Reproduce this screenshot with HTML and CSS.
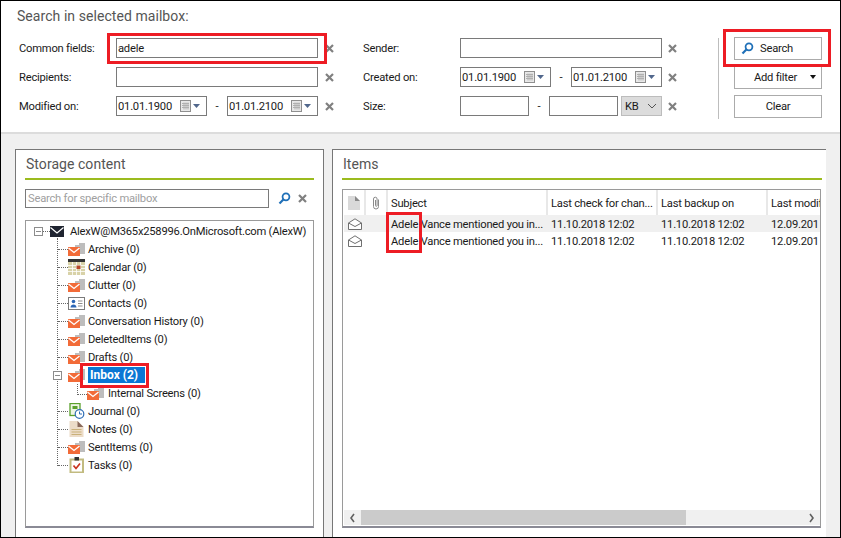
FILE: index.html
```html
<!DOCTYPE html>
<html lang="en">
<head>
<meta charset="utf-8">
<title>Search in selected mailbox</title>
<link rel="stylesheet" href="styles.css">
</head>
<body>
<svg class="defs" width="0" height="0" aria-hidden="true">
  <defs>
    <symbol id="x" viewBox="0 0 9 9"><path d="M1 1L8 8M8 1L1 8" stroke="#808080" stroke-width="2.2" fill="none"/></symbol>
    <symbol id="cal" viewBox="0 0 20 12">
      <rect x=".5" y=".5" width="10" height="11" fill="#e8e8e8" stroke="#8f8f8f"/>
      <path d="M2 3.500h7M2 5.500h7M2 7.500h7M4 2.500v7M6 2.500v7M8 2.500v7" stroke="#b0b0b0" fill="none"/>
      <path d="M13 4h7l-3.500 4z" fill="#51678c"/>
    </symbol>
    <symbol id="mag" viewBox="0 0 14 14">
      <circle cx="8.600" cy="5.200" r="3.700" fill="none" stroke="#1f70b8" stroke-width="1.900"/>
      <path d="M5.800 8L1.600 12.400" stroke="#1f70b8" stroke-width="2.300"/>
    </symbol>
    <symbol id="mailfolder" viewBox="0 0 17 14">
      <path d="M7 5V3h4V1h6v11h-5V5z" fill="#bdbdbd"/>
      <path d="M12 5v9H0V5z" fill="#fff"/>
      <rect x="0" y="5" width="12" height="9" fill="#f26b38"/>
      <path d="M.5 6L6 10.500 11.500 6" fill="none" stroke="#fff" stroke-width="1.300"/>
    </symbol>
    <symbol id="mailopen" viewBox="0 0 14 12">
      <path d="M.5 5L7 .8 13.500 5v6.500H.5z" fill="#fff" stroke="#6f6f6f"/>
      <path d="M.5 5L7 8.500 13.500 5" fill="none" stroke="#6f6f6f"/>
    </symbol>
  </defs>
</svg>

<div class="frame">
  <header class="search">
    <h1 class="search-title">Search in selected mailbox:</h1>
    <div class="search-body">
      <div class="fields">
        <div class="row">
          <label class="lab lab-a">Common fields:</label>
          <div class="field wide"><span class="val">adele</span></div>
          <svg class="clear"><use href="#x"/></svg>
          <label class="lab lab-b">Sender:</label>
          <div class="field wide"></div>
          <svg class="clear"><use href="#x"/></svg>
        </div>
        <div class="row">
          <label class="lab lab-a">Recipients:</label>
          <div class="field wide"></div>
          <svg class="clear"><use href="#x"/></svg>
          <label class="lab lab-b">Created on:</label>
          <div class="range">
            <div class="field date"><span class="val">01.01.1900</span><svg class="calicon"><use href="#cal"/></svg></div>
            <span class="dash">-</span>
            <div class="field date"><span class="val">01.01.2100</span><svg class="calicon"><use href="#cal"/></svg></div>
          </div>
          <svg class="clear"><use href="#x"/></svg>
        </div>
        <div class="row">
          <label class="lab lab-a">Modified on:</label>
          <div class="range">
            <div class="field date"><span class="val">01.01.1900</span><svg class="calicon"><use href="#cal"/></svg></div>
            <span class="dash">-</span>
            <div class="field date"><span class="val">01.01.2100</span><svg class="calicon"><use href="#cal"/></svg></div>
          </div>
          <svg class="clear"><use href="#x"/></svg>
          <label class="lab lab-b">Size:</label>
          <div class="range">
            <div class="field size"></div>
            <span class="dash">-</span>
            <div class="field size"></div>
            <div class="unit"><span>KB</span><svg class="chev" viewBox="0 0 10 6"><path d="M1 1l4 4 4-4" fill="none" stroke="#555"/></svg></div>
          </div>
          <svg class="clear"><use href="#x"/></svg>
        </div>
      </div>
      <div class="actions">
        <button class="btn btn-search"><svg class="mag"><use href="#mag"/></svg>Search</button>
        <button class="btn btn-filter">Add filter<span class="caret"></span></button>
        <button class="btn">Clear</button>
      </div>
    </div>
  </header>

  <main class="content">
    <section class="panel storage">
      <h2 class="panel-title">Storage content</h2>
      <div class="finder">
        <div class="field findbox"><span class="placeholder">Search for specific mailbox</span></div>
        <svg class="mag-big"><use href="#mag"/></svg>
        <svg class="clear clear-find"><use href="#x"/></svg>
      </div>
      <div class="tree">
        <div class="guide guide-main"></div>
        <div class="guide guide-sub"></div>
        <div class="node root">
          <span class="toggle"></span>
          <svg class="ico-root" viewBox="0 0 14 11"><rect width="14" height="11" fill="#1f2430"/><path d="M.5 1.500L7 7l6.500-5.500" fill="none" stroke="#fff" stroke-width="1.200"/></svg>
          <span class="txt">AlexW@M365x258996.OnMicrosoft.com (AlexW)</span>
        </div>
        <div class="node lvl1"><svg class="ico"><use href="#mailfolder"/></svg><span class="txt">Archive (0)</span></div>
        <div class="node lvl1"><svg class="ico ico-tall" viewBox="0 0 17 16"><rect x="0" y="0" width="17" height="16" fill="#d8d2a8"/><rect x="0" y="0" width="17" height="3" fill="#333"/><path d="M0 6.500h17M0 9.500h17M0 12.500h17M4.500 3v13M8.500 3v13M12.500 3v13" stroke="#fff" stroke-width=".8"/><rect x="8.500" y="6.500" width="4" height="3.500" fill="#b5482a"/></svg><span class="txt">Calendar (0)</span></div>
        <div class="node lvl1"><svg class="ico"><use href="#mailfolder"/></svg><span class="txt">Clutter (0)</span></div>
        <div class="node lvl1"><svg class="ico" viewBox="0 0 17 14"><rect x=".5" y="1.500" width="16" height="12" fill="#fff" stroke="#7b7b7b"/><circle cx="5.500" cy="5.500" r="1.800" fill="#2b66b5"/><path d="M2.500 11.500c0-4 6-4 6 0z" fill="#2b66b5"/><path d="M10 5h4.500M10 7.500h4.500M10 10h4.500" stroke="#8d8d8d"/></svg><span class="txt">Contacts (0)</span></div>
        <div class="node lvl1"><svg class="ico"><use href="#mailfolder"/></svg><span class="txt">Conversation History (0)</span></div>
        <div class="node lvl1"><svg class="ico"><use href="#mailfolder"/></svg><span class="txt">DeletedItems (0)</span></div>
        <div class="node lvl1"><svg class="ico"><use href="#mailfolder"/></svg><span class="txt">Drafts (0)</span></div>
        <div class="node lvl1 inbox"><span class="toggle toggle-sub"></span><svg class="ico"><use href="#mailfolder"/></svg><span class="txt selected">Inbox (2)</span></div>
        <div class="node lvl2"><svg class="ico"><use href="#mailfolder"/></svg><span class="txt">Internal Screens (0)</span></div>
        <div class="node lvl1"><svg class="ico ico-tall" viewBox="0 0 16 16"><rect x="1.500" y=".5" width="10" height="12" fill="#eef5e4" stroke="#5aa02c" stroke-width="1.300"/><rect x="4" y="3" width="5" height="3" fill="#5aa02c"/><circle cx="11" cy="11" r="4.300" fill="#fff" stroke="#2f6db5" stroke-width="1.200"/><path d="M11 8.500V11h2.500" fill="none" stroke="#2f6db5"/></svg><span class="txt">Journal (0)</span></div>
        <div class="node lvl1"><svg class="ico ico-tall" viewBox="0 0 16 16"><path d="M1 0h8l6 6v10H1z" fill="#ecdcc8"/><path d="M9 0l6 6H9z" fill="#8a6a5c"/><path d="M3 8.500h10M3 11h10M3 13.500h10" stroke="#c9b079"/></svg><span class="txt">Notes (0)</span></div>
        <div class="node lvl1"><svg class="ico"><use href="#mailfolder"/></svg><span class="txt">SentItems (0)</span></div>
        <div class="node lvl1"><svg class="ico ico-tall" viewBox="0 0 16 16"><rect x="2" y="2.500" width="12.500" height="13" fill="#fff" stroke="#c2bb80" stroke-width="2"/><rect x="6" y="0" width="4.500" height="3.500" fill="#333"/><path d="M5 8.500l2.500 3 4-5" fill="none" stroke="#c9341e" stroke-width="1.700"/></svg><span class="txt">Tasks (0)</span></div>
      </div>
    </section>

    <section class="panel items">
      <h2 class="panel-title">Items</h2>
      <div class="table">
        <div class="thead">
          <div class="th c-ico"><svg class="hd-doc" viewBox="0 0 12 14"><path d="M0 0h7l5 5v9H0z" fill="#d9d9d9"/><path d="M7 0l5 5H7z" fill="#8a8a8a"/></svg></div>
          <div class="th c-att"><svg class="hd-clip" viewBox="0 0 8 14"><path d="M6.500 3.500v7a2.500 2.500 0 0 1-5 0V3a1.800 1.800 0 0 1 3.600 0v6.500a.8.8 0 0 1-1.600 0V4" fill="none" stroke="#8a8a8a"/></svg></div>
          <div class="th c-sub">Subject</div>
          <div class="th c-date">Last check for chan...</div>
          <div class="th c-date">Last backup on</div>
          <div class="th c-last">Last modif</div>
        </div>
        <div class="tr odd">
          <div class="td c-ico"><svg class="mailopen"><use href="#mailopen"/></svg></div>
          <div class="td c-att"></div>
          <div class="td c-sub">Adele Vance mentioned you in...</div>
          <div class="td c-date">11.10.2018 12:02</div>
          <div class="td c-date">11.10.2018 12:02</div>
          <div class="td c-last">12.09.201</div>
        </div>
        <div class="tr">
          <div class="td c-ico"><svg class="mailopen"><use href="#mailopen"/></svg></div>
          <div class="td c-att"></div>
          <div class="td c-sub">Adele Vance mentioned you in...</div>
          <div class="td c-date">11.10.2018 12:02</div>
          <div class="td c-date">11.10.2018 12:02</div>
          <div class="td c-last">12.09.201</div>
        </div>
        <div class="hscroll">
          <svg class="arrow" viewBox="0 0 6 10"><path d="M4.500 1L1.500 5l3 4" fill="none" stroke="#606060" stroke-width="1.600"/></svg>
          <div class="track"><div class="thumb"></div></div>
          <svg class="arrow" viewBox="0 0 6 10"><path d="M1.500 1l3 4-3 4" fill="none" stroke="#606060" stroke-width="1.600"/></svg>
        </div>
      </div>
    </section>
  </main>

  <div class="mark mark-common"></div>
  <div class="mark mark-search"></div>
  <div class="mark mark-inbox"></div>
  <div class="mark mark-adele"></div>
</div>
</body>
</html>
```
FILE: styles.css
```css
* { box-sizing: border-box; }
html, body { margin: 0; padding: 0; }
body { width: 841px; height: 538px; background: #fff; font-family: Roboto, "Liberation Sans", sans-serif; font-size: 11.2px; letter-spacing: -.22px; color: #1a1a1a; overflow: hidden; }
.defs { position: absolute; }

.frame { position: relative; width: 841px; height: 538px; border: 1px solid #000; background: #f0f0f0; display: flex; flex-direction: column; overflow: hidden; }

.search { height: 133px; background: #fff; border-bottom: 2px solid #dcdcdc; padding: 6px 0 0 16px; flex: none; }
.search-title { margin: 0; font-size: 14px; font-weight: 400; line-height: 19px; color: #555; letter-spacing: .06px; }
.search-body { display: flex; margin-top: 12px; }
.fields { width: 664px; display: flex; flex-direction: column; gap: 9px; }
.row { display: flex; align-items: center; height: 20px; }
.lab { white-space: nowrap; padding-top: 1px; }
.lab-a { width: 99px; padding-left: 2px; }
.lab-b { width: 97px; margin-left: 29px; }
.field { height: 20px; border: 1px solid #7a7a7a; background: #fff; display: flex; align-items: center; padding-left: 1px; flex: none; }
.wide { width: 202px; }
.val { white-space: nowrap; padding-top: 1px; }
.range { display: flex; align-items: center; width: 202px; flex: none; }
.date { width: 91px; justify-content: space-between; }
.calicon { width: 20px; height: 12px; flex: none; margin-right: 6px; }
.dash { flex: 1; text-align: center; }
.size { width: 69px; }
.unit { width: 41px; height: 20px; margin-left: 3px; background: #dcdcdc; border: 1px solid #bcbcbc; display: flex; align-items: center; justify-content: space-between; padding: 0 4px 0 3px; flex: none; }
.chev { width: 10px; height: 6px; }
.clear { width: 9px; height: 9px; margin-left: 7px; flex: none; }
.row > .clear:last-child { margin-left: 6px; }

.actions { display: flex; flex-direction: column; gap: 6px; margin-left: 37px; border-left: 1px solid #bdbdbd; padding-left: 15px; height: 81px; }
.btn { width: 88px; height: 23px; border: 1px solid #ababab; background: #fff; font: inherit; letter-spacing: inherit; color: inherit; padding: 0; display: flex; align-items: center; justify-content: center; position: relative; flex: none; }
.btn-search { justify-content: flex-start; padding-left: 6px; gap: 6px; margin-top: -1px; }
.mag { width: 13px; height: 13px; }
.caret { position: absolute; right: 5px; top: 8px; border: 3.500px solid transparent; border-top: 4px solid #111; border-bottom: 0; }
.btn-filter { padding-right: 5px; }

.content { flex: 1; display: flex; gap: 8px; padding: 15px 14px 0 14px; min-height: 0; }
.panel { background: #fff; border: 1px solid #777; border-bottom: 0; padding: 0 9px; display: flex; flex-direction: column; }
.storage { width: 309px; }
.items { flex: 1; border-right: 0; padding-right: 4px; }
.panel-title { margin: 0; font-size: 14px; font-weight: 400; line-height: 19px; color: #555; padding: 5px 0 3px 1px; border-bottom: 2px solid #9bbb1e; height: 30px; letter-spacing: .05px; flex: none; }
.finder { display: flex; align-items: center; margin-top: 9px; height: 19px; flex: none; }
.findbox { width: 244px; height: 19px; padding-left: 2px; }
.placeholder { color: #a0a0a0; white-space: nowrap; }
.mag-big { width: 13px; height: 13px; margin-left: 9px; }
.clear-find { margin-left: 7px; }

.tree { position: relative; margin-top: 12px; height: 308px; border: 1px solid #9a9a9a; border-bottom: 2px solid #8a8a95; padding-top: 1px; flex: none; }
.guide { position: absolute; border-left: 1px dotted #666; }
.guide-main { left: 31px; top: 17px; height: 228px; border-bottom: 1px dotted #666; width: 11px; }
.guide-sub { left: 51px; top: 163px; height: 11px; width: 10px; border-bottom: 1px dotted #666; }
.node { height: 18px; display: flex; align-items: center; position: relative; white-space: nowrap; }
.root { padding-left: 8px; }
.root::before { content: ""; position: absolute; left: 17px; top: 9px; width: 7px; border-top: 1px dotted #666; }
.toggle { width: 9px; height: 9px; border: 1px solid #8c8c8c; background: linear-gradient(#8c8c8c, #8c8c8c) center / 5px 1px no-repeat #fff; flex: none; position: relative; z-index: 1; }
.ico-root { width: 14px; height: 11px; margin-left: 7px; margin-right: 6px; flex: none; }
.ico { width: 17px; height: 14px; flex: none; margin-right: 3px; position: relative; }
.ico-tall { height: 16px; }
.lvl1 { padding-left: 42px; }
.lvl1::before { content: ""; position: absolute; left: 32px; top: 9px; width: 10px; border-top: 1px dotted #666; }
.lvl2 { padding-left: 61px; }
.lvl2 .ico { margin-right: 4px; }
.inbox .toggle-sub { position: absolute; left: 27px; top: 5px; }
.inbox::before { display: none; }
.selected { background: #0a77d4; color: #fff; font-weight: 700; font-size: 12px; letter-spacing: 0; width: 57px; padding-left: 2px; line-height: 16px; height: 16px; }

.table { border: 1px solid #9a9a9a; border-bottom: 2px solid #8a8a95; height: 339px; margin-top: 9px; width: 479px; display: flex; flex-direction: column; padding: 0 0 1px 1px; flex: none; }
.thead { display: flex; height: 25px; flex: none; }
.tr { display: flex; height: 17px; flex: none; align-items: stretch; }
.odd { background: #f0f0f0; }
.th { display: flex; align-items: center; border-right: 2px solid #e8e8e8; padding: 1px 0 0 3px; overflow: hidden; white-space: nowrap; }
.td { display: flex; align-items: center; padding: 1px 0 0 3px; overflow: hidden; white-space: nowrap; }
.c-ico { width: 22px; justify-content: center; padding: 0; }
.c-att { width: 22px; justify-content: center; padding: 0; }
.c-sub { width: 160px; }
.c-date { width: 110px; }
.c-last { flex: 1; border-right: 0; min-width: 0; }
.hd-doc { width: 12px; height: 14px; }
.hd-clip { width: 8px; height: 14px; }
.mailopen { width: 14px; height: 12px; }
.hscroll { margin-top: auto; height: 15px; display: flex; background: #f0f0f0; align-items: center; }
.arrow { width: 17px; height: 10px; flex: none; }
.track { flex: 1; height: 15px; }
.thumb { width: 325px; height: 15px; background: #cbcbcb; }

.mark { position: absolute; border: 3px solid #ed1c24; pointer-events: none; }
.mark-common { left: 106px; top: 32px; width: 220px; height: 31px; }
.mark-search { left: 722px; top: 28px; width: 108px; height: 38px; }
.mark-inbox { left: 79px; top: 362px; width: 69px; height: 25px; }
.mark-adele { left: 385px; top: 211px; width: 36px; height: 41px; }
```
